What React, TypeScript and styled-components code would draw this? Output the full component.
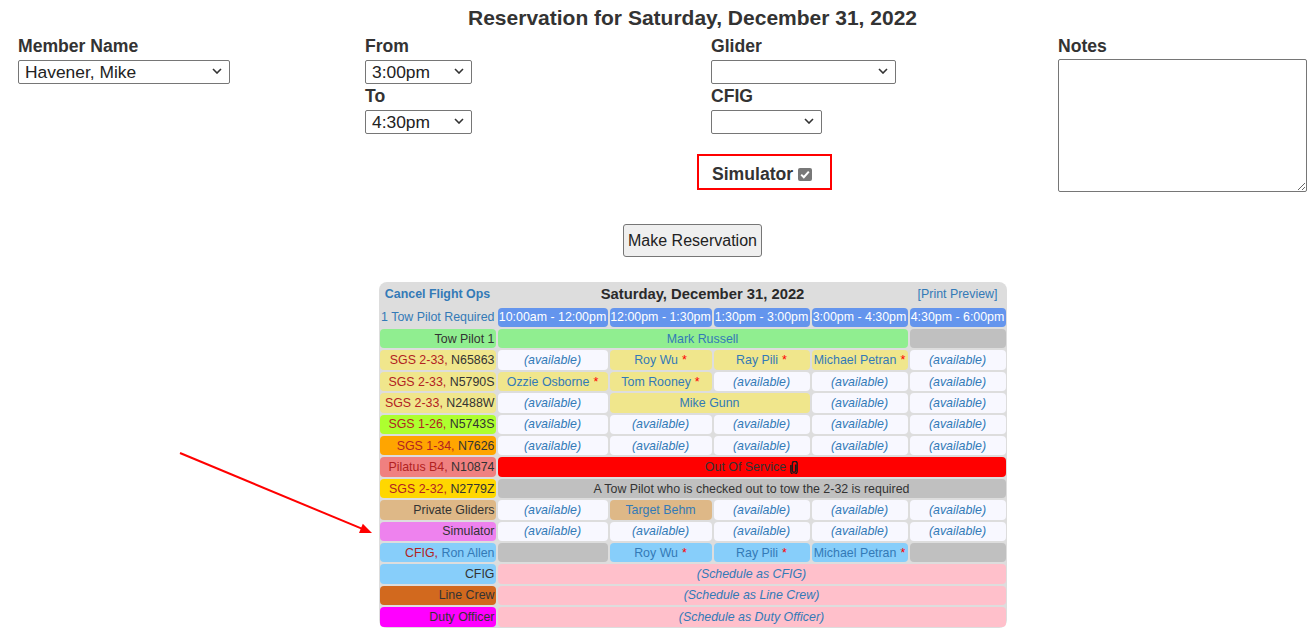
import React from "react";
import styled, { createGlobalStyle } from "styled-components";

const GlobalStyle = createGlobalStyle`
  html, body { margin: 0; padding: 0; overflow: hidden; background: #fff; }
  body { font-family: "Liberation Sans", Arial, sans-serif; color: #333; font-size: 17.6px; }
`;

const BLUE = "#337ab7";

const Page = styled.div`
  position: relative;
  width: 1315px;
`;

/* centred blocks sit on the axis of a 1385px-wide layout */
const Title = styled.h1`
  margin: 0;
  padding: 6px 0 0 70px;
  font-size: 21px;
  line-height: 24px;
  font-weight: bold;
  text-align: center;
  color: #333;
`;

const Form = styled.div`
  display: grid;
  grid-template-columns: 347px 346px 347px 275px;
  margin-top: 6px;
`;

const Column = styled.div`
  display: flex;
  flex-direction: column;
  align-items: flex-start;
  padding-left: 18px;
`;

const Label = styled.label`
  display: block;
  font-weight: bold;
  line-height: 20px;
  margin-bottom: 4px;
  color: #333;
`;

const SelectWrap = styled.div<{ $w: number }>`
  position: relative;
  width: ${(p) => p.$w}px;
  height: 24px;
  margin-bottom: 2px;
`;

const Select = styled.select`
  appearance: none;
  width: 100%;
  height: 100%;
  margin: 0;
  padding: 0 20px 0 6px;
  font-family: "Liberation Sans", Arial, sans-serif;
  font-size: 17.4px;
  color: #222;
  background: #fff;
  border: 1px solid #767676;
  border-radius: 2px;
  box-sizing: border-box;
`;

const Chevron = styled.svg`
  position: absolute;
  right: 8px;
  top: 8px;
  pointer-events: none;
`;

const SimBox = styled.div`
  margin: 18px 0 0 -14px;
  width: 135px;
  height: 36px;
  box-sizing: border-box;
  border: 2px solid #f00;
  padding: 8px 0 4px 13px;
  display: flex;
  align-items: center;
  font-weight: bold;
  line-height: 20px;
`;

const CheckBox = styled.span`
  display: inline-flex;
  align-items: center;
  justify-content: center;
  width: 14px;
  height: 13px;
  margin-left: 5px;
  background: #787878;
  border-radius: 2px;
`;

const Notes = styled.textarea`
  margin-top: -1px;
  width: 249px;
  height: 133px;
  box-sizing: border-box;
  border: 1px solid #767676;
  border-radius: 2px;
  font-family: "Liberation Mono", monospace;
`;

const ButtonRow = styled.div`
  display: flex;
  justify-content: center;
  margin-top: 32px;
  padding-left: 70px;
`;

const Button = styled.button`
  font-family: "Liberation Sans", Arial, sans-serif;
  font-size: 16px;
  line-height: 19px;
  padding: 6px 4px;
  color: #222;
  background: #efefef;
  border: 1px solid #767676;
  border-radius: 3px;
`;

const TableArea = styled.div`
  display: flex;
  justify-content: center;
  padding-left: 70px;
  margin-top: 25.3px;
`;

const Schedule = styled.div`
  display: grid;
  grid-template-columns: 116px 110px 102px 96px 96px 96px;
  grid-template-rows: 22.4px;
  grid-auto-rows: 19.4px;
  gap: 2px;
  padding: 1px;
  width: max-content;
  background: #ddd;
  border-radius: 8px;
`;

const Cell = styled.div<{ $bg?: string; $span?: number }>`
  grid-column: span ${(p) => p.$span ?? 1};
  background: ${(p) => p.$bg ?? "transparent"};
  display: flex;
  align-items: center;
  justify-content: center;
  padding: 0 1px;
  border-radius: 4px;
  font-size: 12.4px;
  white-space: nowrap;
  overflow: hidden;
  color: #333;
`;

const HeadLink = styled(Cell)<{ $bold?: boolean }>`
  color: ${BLUE};
  font-weight: ${(p) => (p.$bold ? "bold" : "normal")};
`;

const DateHead = styled(Cell)`
  font-size: 14.8px;
  font-weight: bold;
  color: #2a2a2a;
`;

const TimeHead = styled(Cell)`
  background: #6495ed;
  color: #fff;
`;

const RowLabel = styled(Cell)`
  justify-content: flex-end;
`;

const RequiredNote = styled(Cell)`
  justify-content: flex-end;
  color: ${BLUE};
`;

const Available = styled(Cell)`
  background: #f8f8ff;
  color: ${BLUE};
  font-style: italic;
`;

const Booked = styled(Cell)`
  color: ${BLUE};
`;

const Banner = styled(Cell)<{ $italic?: boolean; $blue?: boolean }>`
  font-style: ${(p) => (p.$italic ? "italic" : "normal")};
  color: ${(p) => (p.$blue ? BLUE : "#333")};
`;

const Red = styled.span`
  color: #b22222;
`;

const Blue = styled.span`
  color: ${BLUE};
`;

const Star = styled.span`
  color: #f00;
  margin-left: 4px;
`;

const Clip = styled.svg`
  margin-left: 4px;
`;

const Arrow = styled.svg`
  position: absolute;
  left: 170px;
  top: 440px;
  pointer-events: none;
`;

const KHAKI = "#f0e68c";
const SKY = "#87cefa";
const GRAY = "#c0c0c0";
const PINK = "#ffc0cb";

const Dropdown = ({ w, value }: { w: number; value: string }) => (
  <SelectWrap $w={w}>
    <Select defaultValue={value}>
      <option value={value}>{value}</option>
    </Select>
    <Chevron width="10" height="6" viewBox="0 0 10 6" aria-hidden>
      <path d="M1 1l4 4 4-4" fill="none" stroke="#333" strokeWidth="1.6" />
    </Chevron>
  </SelectWrap>
);

const Avail = () => <Available>(available)</Available>;

const Name = ({ name, bg, star, span }: { name: string; bg: string; star?: boolean; span?: number }) => (
  <Booked $bg={bg} $span={span}>
    {name}
    {star && <Star>*</Star>}
  </Booked>
);

const Glider = ({ type, tail, bg }: { type: string; tail: string; bg: string }) => (
  <RowLabel $bg={bg}>
    <Red>{type},</Red>&nbsp;{tail}
  </RowLabel>
);

export default function App() {
  return (
    <Page>
      <GlobalStyle />
      <Title>Reservation for Saturday, December 31, 2022</Title>
      <Form>
        <Column>
          <Label>Member Name</Label>
          <Dropdown w={212} value="Havener, Mike" />
        </Column>
        <Column>
          <Label>From</Label>
          <Dropdown w={107} value="3:00pm" />
          <Label>To</Label>
          <Dropdown w={107} value="4:30pm" />
        </Column>
        <Column>
          <Label>Glider</Label>
          <Dropdown w={185} value="" />
          <Label>CFIG</Label>
          <Dropdown w={111} value="" />
          <SimBox>
            Simulator
            <CheckBox role="checkbox" aria-checked="true" aria-disabled="true">
              <svg width="10" height="9" viewBox="0 0 10 9" aria-hidden>
                <path d="M1.2 4.6l2.6 2.6L8.8 1.6" fill="none" stroke="#fff" strokeWidth="2" />
              </svg>
            </CheckBox>
          </SimBox>
        </Column>
        <Column>
          <Label>Notes</Label>
          <Notes />
        </Column>
      </Form>
      <ButtonRow>
        <Button>Make Reservation</Button>
      </ButtonRow>

      <TableArea>
        <Schedule>
          <HeadLink $bold>Cancel Flight Ops</HeadLink>
          <DateHead $span={4}>Saturday, December 31, 2022</DateHead>
          <HeadLink>[Print Preview]</HeadLink>

          <RequiredNote>1 Tow Pilot Required</RequiredNote>
          <TimeHead>10:00am - 12:00pm</TimeHead>
          <TimeHead>12:00pm - 1:30pm</TimeHead>
          <TimeHead>1:30pm - 3:00pm</TimeHead>
          <TimeHead>3:00pm - 4:30pm</TimeHead>
          <TimeHead>4:30pm - 6:00pm</TimeHead>

          <RowLabel $bg="#90ee90">Tow Pilot 1</RowLabel>
          <Name name="Mark Russell" bg="#90ee90" span={4} />
          <Cell $bg={GRAY} />

          <Glider type="SGS 2-33" tail="N65863" bg={KHAKI} />
          <Avail />
          <Name name="Roy Wu" bg={KHAKI} star />
          <Name name="Ray Pili" bg={KHAKI} star />
          <Name name="Michael Petran" bg={KHAKI} star />
          <Avail />

          <Glider type="SGS 2-33" tail="N5790S" bg={KHAKI} />
          <Name name="Ozzie Osborne" bg={KHAKI} star />
          <Name name="Tom Rooney" bg={KHAKI} star />
          <Avail />
          <Avail />
          <Avail />

          <Glider type="SGS 2-33" tail="N2488W" bg={KHAKI} />
          <Avail />
          <Name name="Mike Gunn" bg={KHAKI} span={2} />
          <Avail />
          <Avail />

          <Glider type="SGS 1-26" tail="N5743S" bg="#adff2f" />
          <Avail />
          <Avail />
          <Avail />
          <Avail />
          <Avail />

          <Glider type="SGS 1-34" tail="N7626" bg="#ffa500" />
          <Avail />
          <Avail />
          <Avail />
          <Avail />
          <Avail />

          <Glider type="Pilatus B4" tail="N10874" bg="#f08080" />
          <Banner $bg="#ff0000" $span={5}>
            Out Of Service
            <Clip width="8" height="13" viewBox="0 0 8 13" aria-hidden>
              <path
                d="M5.6 3.5v6.2a1.6 1.6 0 0 1-3.2 0V2.6a2.4 2.4 0 0 1 4.8 0v7.6a3.2 3.2 0 0 1-6.4 0V4"
                fill="none"
                stroke="#1a1a1a"
                strokeWidth="1.4"
              />
            </Clip>
          </Banner>

          <Glider type="SGS 2-32" tail="N2779Z" bg="#ffd700" />
          <Banner $bg={GRAY} $span={5}>
            A Tow Pilot who is checked out to tow the 2-32 is required
          </Banner>

          <RowLabel $bg="#deb887">Private Gliders</RowLabel>
          <Avail />
          <Name name="Target Behm" bg="#deb887" />
          <Avail />
          <Avail />
          <Avail />

          <RowLabel $bg="#ee82ee">Simulator</RowLabel>
          <Avail />
          <Avail />
          <Avail />
          <Avail />
          <Avail />

          <RowLabel $bg={SKY}>
            <Red>CFIG,</Red>&nbsp;<Blue>Ron Allen</Blue>
          </RowLabel>
          <Cell $bg={GRAY} />
          <Name name="Roy Wu" bg={SKY} star />
          <Name name="Ray Pili" bg={SKY} star />
          <Name name="Michael Petran" bg={SKY} star />
          <Cell $bg={GRAY} />

          <RowLabel $bg={SKY}>CFIG</RowLabel>
          <Banner $bg={PINK} $span={5} $italic $blue>
            (Schedule as CFIG)
          </Banner>

          <RowLabel $bg="#d2691e">Line Crew</RowLabel>
          <Banner $bg={PINK} $span={5} $italic $blue>
            (Schedule as Line Crew)
          </Banner>

          <RowLabel $bg="#ff00ff">Duty Officer</RowLabel>
          <Banner $bg={PINK} $span={5} $italic $blue>
            (Schedule as Duty Officer)
          </Banner>
        </Schedule>
      </TableArea>

      <Arrow width="210" height="100" viewBox="0 0 210 100" aria-hidden>
        <line x1="10" y1="13" x2="193" y2="89.2" stroke="#f00" strokeWidth="2" />
        <polygon points="202,93 189,93 192.8,83.8" fill="#f00" />
      </Arrow>
    </Page>
  );
}
